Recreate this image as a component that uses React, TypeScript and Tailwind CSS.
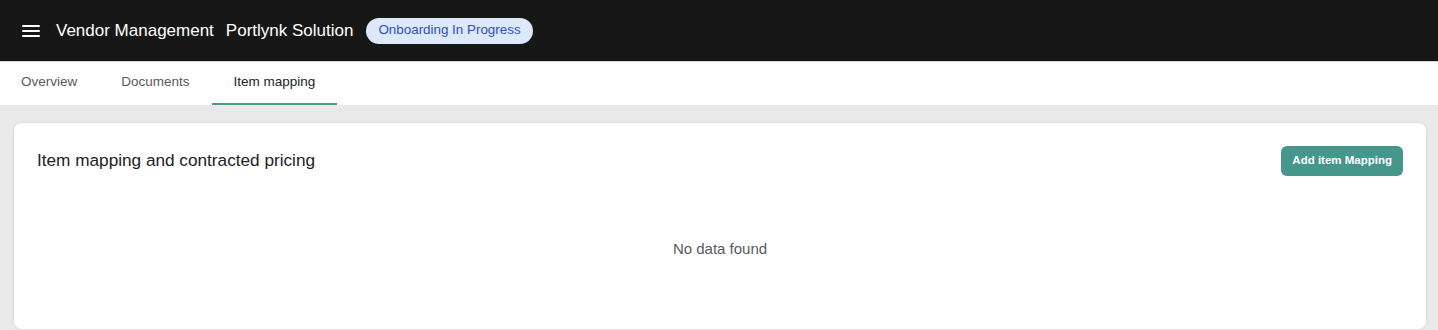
import React, { useState } from 'react'

// Vendor detail page — item mapping tab, empty state

const tabs = ['Overview', 'Documents', 'Item mapping']

export default function App() {
  const [active, setActive] = useState(2)

  return (
    <div className="flex h-[330px] flex-col bg-[#e9e9e9] font-['Liberation_Sans',Arial,sans-serif]">
      {/* header */}
      <header className="flex h-[61px] shrink-0 items-center bg-[#171717] pl-[22px]">
        <svg width="18" height="14" viewBox="0 0 18 14" className="text-white">
          <rect x="0" y="1" width="18" height="2" rx="1" fill="currentColor" />
          <rect x="0" y="6" width="18" height="2" rx="1" fill="currentColor" />
          <rect x="0" y="11" width="18" height="2" rx="1" fill="currentColor" />
        </svg>
        <span className="ml-[16px] text-[17px] text-white">Vendor Management</span>
        <span className="ml-[12px] text-[17px] text-white">Portlynk Solution</span>
        <span className="ml-[13px] flex h-[26px] items-center rounded-full bg-[#dde8fb] px-[12px] text-[13.4px] text-[#2f4fc0]">
          Onboarding In Progress
        </span>
      </header>

      {/* tabs */}
      <nav className="flex h-[44px] shrink-0 border-t border-[#d4d4d4] bg-white">
        {tabs.map((t, i) => (
          <button
            key={t}
            onClick={() => setActive(i)}
            className={`flex items-center border-b-2 px-[22px] text-[13.5px] first:pl-[21px] ${
              i === active ? 'border-[#4a9a8e] text-[#222]' : 'border-transparent text-[#5a5a5a]'
            }`}
          >
            {t}
          </button>
        ))}
      </nav>

      {/* content */}
      <main className="flex-1 px-[14px] pt-[18px] pl-[14px] pr-[12px]">
        <section className="h-[206px] rounded-[8px] bg-white shadow-[0_0_4px_rgba(0,0,0,0.08)]">
          <div className="flex items-center justify-between pl-[23px] pr-[23px] pt-[23px]">
            <h2 className="text-[17.2px] text-[#222]">Item mapping and contracted pricing</h2>
            <button className="flex h-[30px] items-center rounded-[6px] bg-[#44978a] px-[11px] text-[11.5px] font-bold text-white">
              Add item Mapping
            </button>
          </div>
          <p className="mt-[62px] text-center text-[15px] text-[#555b63]">No data found</p>
        </section>
      </main>
    </div>
  )
}
